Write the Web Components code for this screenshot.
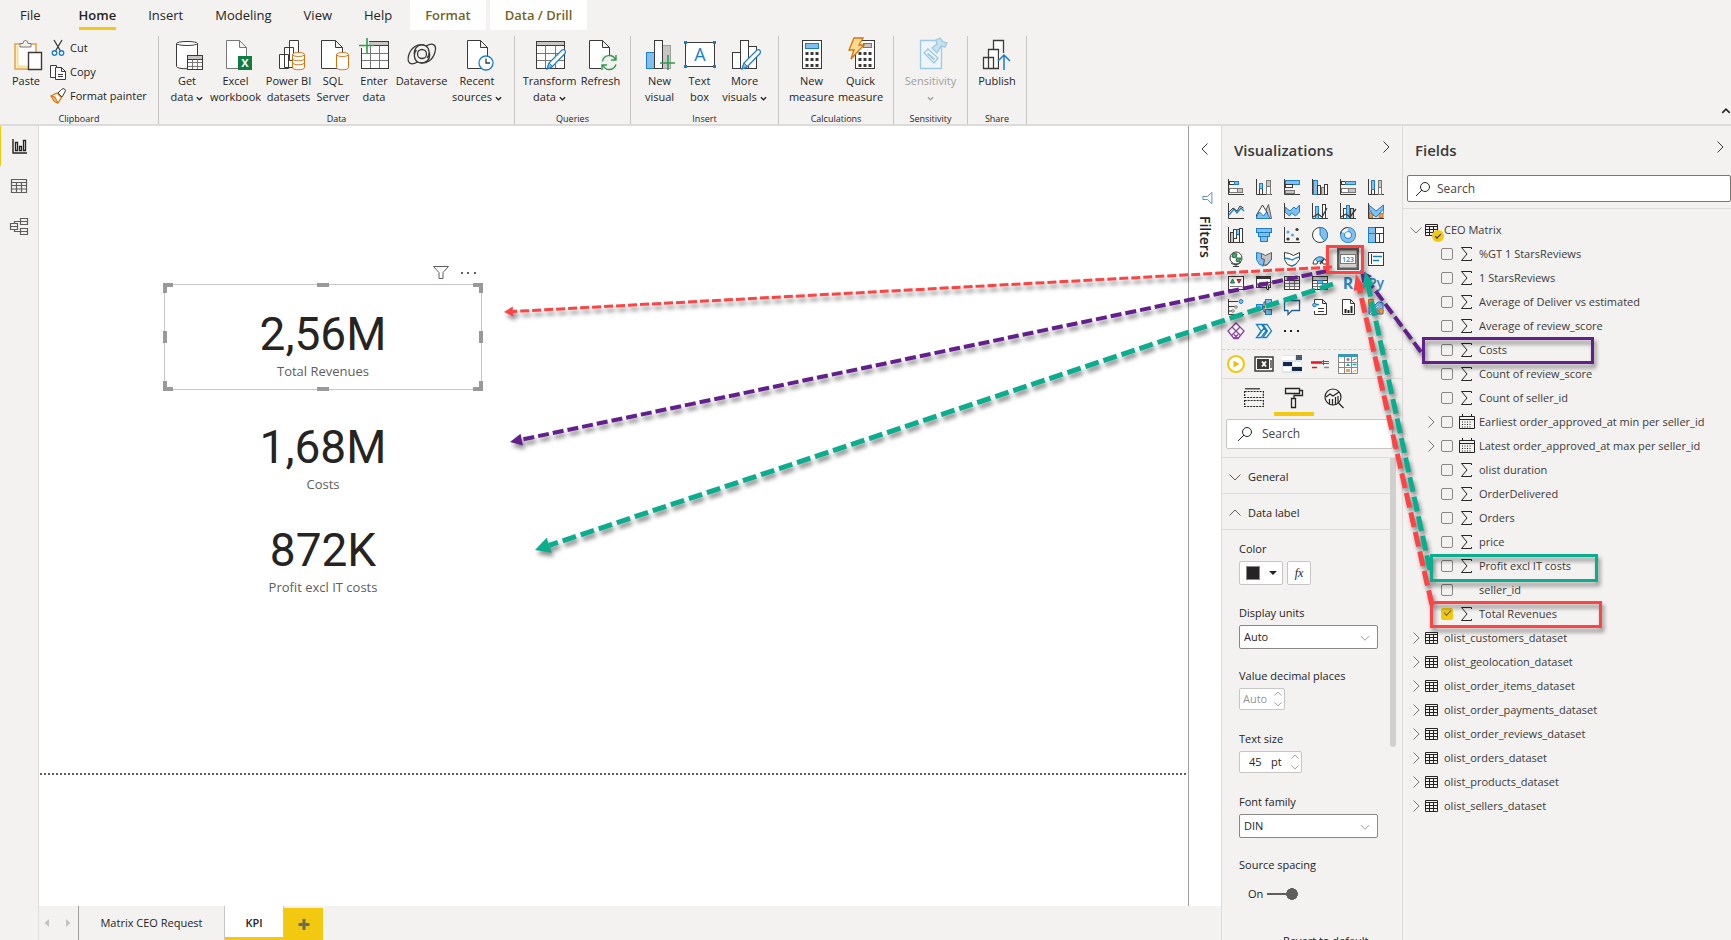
<!DOCTYPE html>
<html lang="en">
<head>
<meta charset="utf-8">
<title>KPI - Power BI Desktop</title>
<style>
  html, body { margin: 0; height: 100%; }
  body {
    font-family: "Open Sans", "Noto Sans", sans-serif;
    font-size: 11px; line-height: 16px; color: #252423;
    background: #f3f2f1; overflow: hidden;
    --yellow: #f2c811; --line: #dedcda; --chrome: #f3f2f1;
  }
</style>
</head>
<body>
<pbi-app></pbi-app>

<script>
/* ---------- icon library ---------- */
const D = '#3b3a39', B = '#1a7fc9', L = '#83beec', G = '#c8c6c4', O = '#d8720f';
const doc = (x, y, w, h, c = D) =>
  `<path fill="#fff" stroke="${c}" d="M${x} ${y}h${w - 7}l7 7v${h - 7}h-${w}zM${x + w - 7} ${y}v7h7"/>`;
const cyl = (x, y, w, h, c, bands = 0) => {
  let s = `<path fill="#fff" stroke="${c}" d="M${x} ${y + 2}v${h - 4}c0 3 ${w} 3 ${w} 0v-${h - 4}"/><ellipse cx="${x + w / 2}" cy="${y + 2}" rx="${w / 2}" ry="2" fill="#fff" stroke="${c}"/>`;
  for (let i = 1; i <= bands; i++) s += `<path fill="none" stroke="${c}" d="M${x} ${y + 2 + i * 4}c0 3 ${w} 3 ${w} 0"/>`;
  return s;
};
const grid = (x, y, w, h, c = D) => {
  const a = Math.round((h - 4) / 3), b = Math.round((h - 4) * 2 / 3), p = Math.round(w / 3), q = Math.round(w * 2 / 3);
  return `<path fill="#fff" stroke="${c}" d="M${x} ${y}h${w}v${h}h-${w}z"/><path fill="${G}" stroke="${c}" d="M${x} ${y}h${w}v4h-${w}z"/><path fill="none" stroke="#797775" d="M${x} ${y + 4 + a}h${w}M${x} ${y + 4 + b}h${w}M${x + p} ${y + 4}v${h - 4}M${x + q} ${y + 4}v${h - 4}"/><path fill="none" stroke="${c}" d="M${x} ${y}h${w}v${h}h-${w}z"/>`;
};
const pen = (x, y) =>
  `<g transform="translate(${x} ${y})"><path fill="#fff" stroke="${B}" stroke-width="1.3" d="M1 20l2-6L16 1q2-1 3 .5t0 3L6 18z"/><path fill="${L}" stroke="${B}" d="M1 20l2-6 3.500 3.500z"/></g>`;
const axes = () => `<path fill="none" stroke="${D}" d="M.5 0v15.500H16"/>`;
const r = (x, y, w, h, f, s) => `<rect x="${x}" y="${y}" width="${w}" height="${h}" fill="${f}" stroke="${s}"/>`;
const keys = (x, y) => { let s = ''; for (let i = 0; i < 3; i++) for (let j = 0; j < 3; j++) s += `<rect x="${x + i * 5}" y="${y + j * 6}" width="3" height="3" fill="${D}"/>`; return s; };

const ICONS = {
  /* ribbon, 32 x 32 */
  paste: `<path fill="#fff" stroke="#e3a043" stroke-width="1.500" d="M5 5h21v25H5z"/><path fill="none" stroke="#f9dd97" stroke-width="2" d="M7.500 7v20.500H18"/><path fill="#f3f2f1" stroke="#797775" d="M10 8V4.500h3q0-3 2.500-3t2.500 3h3V8z"/><path fill="#fff" stroke="${D}" stroke-width="1.400" d="M18.500 13.500h13v17h-13z"/>`,
  getdata: cyl(5.5, 2.5, 21, 27, D) + grid(16.5, 16.5, 15, 14),
  excel: doc(6.5, 1.5, 20, 28, '#797775') + `<rect x="18" y="17" width="14" height="14" fill="#107c41"/><text x="25" y="28" text-anchor="middle" font-size="11" font-weight="700" fill="#fff">X</text>`,
  pbids: `<path fill="#fff" stroke="${D}" d="M16.500 1.500h9v20h-9zM11.500 8.500h9v20h-9zM6.500 15.500h9v14h-9z"/>` + cyl(19.5, 13.5, 12, 17, O, 2),
  sql: doc(4.5, 1.5, 21, 28) + cyl(19.5, 13.5, 12, 17, O),
  enter: grid(3.5, 2.5, 27, 27) + `<path fill="#f3f2f1" d="M0 0h11v9H0z"/><path stroke="#2f9b4d" stroke-width="1.600" d="M9 -1v15M1 6.500h15"/>`,
  dataverse: `<g fill="none" stroke="${D}" stroke-width="1.300"><circle cx="16" cy="15" r="4.500"/><path d="M8.500 16.500C7 8 14 4 20 7c4 3 4 9 1 12M23.500 13.500c1.500 8-5.500 12.500-12 9.500-4-3-4-9-1-12"/><path d="M20 7c7-4 11-1 9 6-2 8-9 13-17.500 10M11.500 23c-7 4-10.500 1-9-6C4.500 9 12 3 20 7"/></g>`,
  recent: doc(6.5, 1.5, 20, 28) + `<circle cx="25" cy="24" r="7" fill="#fff" stroke="${B}" stroke-width="1.300"/><path fill="none" stroke="${D}" stroke-width="1.300" d="M25 19.500V24h4"/>`,
  transform: grid(2.5, 2.5, 28, 27) + pen(12, 10),
  refresh: doc(4.5, 1.5, 20, 28) + `<rect x="16" y="16" width="16" height="16" fill="#f3f2f1"/><path fill="none" stroke="#2f9b4d" stroke-width="1.400" d="M17.500 22.500c1-7 10-8 13-2M31 16v5h-5M31 25.500c-2 6-10 7-13 1M17 31v-5h5"/>`,
  newvisual: r(2.5, 13.5, 8, 16, L, B) + r(18.5, 6.500, 8, 23, G, '#a19f9d') + r(10.5, 1.5, 8, 28, '#fff', D) + `<path stroke="#2f9b4d" stroke-width="1.600" d="M24 16v15M16 24h15"/>`,
  textbox: r(1.5, 3.5, 29, 24, '#fff', D) + `<g fill="${B}"><path d="M0 2h3v3H0zM29 2h3v3h-3zM0 26h3v3H0zM29 26h3v3h-3z"/></g><text x="16" y="22" text-anchor="middle" font-size="18" fill="${B}">A</text>`,
  morevis: r(3.5, 13.5, 8, 16, '#fff', D) + r(19.5, 7.500, 8, 22, '#fff', D) + r(11.5, 1.5, 8, 28, '#fff', D) + pen(12, 10),
  measure: r(6.5, 1.5, 19, 28, '#fff', D) + r(9.5, 4.5, 13, 5, L, B) + keys(9.5, 13),
  quick: r(10.5, 1.5, 19, 28, '#fff', D) + r(18.5, 4.5, 8, 4, G, '#797775') + keys(13.5, 13) + `<path fill="#fbdc8e" stroke="${O}" stroke-width="1.300" d="M9-1h9l-4 7h5L6 20l3-9H4z"/>`,
  sensitivity: `<g fill="#eef5f9" stroke="#9dc9e2" stroke-width="1.300"><path d="M5.500 1.500h21v28h-21z"/><path d="M9 14l4-4 10 9-4 5z"/><path d="M12.500 14.500l7 6" stroke-width="2"/><path fill="#c9e1ee" d="M17 9l5-4-1-4 4-2 3 4 4 1-2 4-4-1-4 7z"/></g>`,
  publish: `<path fill="#fff" stroke="${D}" stroke-width="1.300" d="M12.500 1.500h10v27h-10z"/><path fill="#fff" stroke="${D}" stroke-width="1.300" d="M7.500 10.500h10v19h-10zM2.500 18.500h10v11h-10z"/><rect x="18" y="14" width="12" height="16" fill="#f3f2f1"/><path fill="none" stroke="${B}" stroke-width="1.500" d="M23 31V16M17 22l6-6 6 6"/>`,

  /* small ones, 16 x 16 */
  cut: `<path fill="none" stroke="${D}" stroke-width="1.300" d="M4 0l6.500 11M12 0L5.500 11"/><g fill="#fff" stroke="${B}" stroke-width="1.400"><circle cx="4.500" cy="13" r="2.200"/><circle cx="11.500" cy="13" r="2.200"/></g>`,
  copy: `<path fill="#fff" stroke="${D}" d="M5 13.500H.5V1.500h6V4M5.500 3.500h6l4 4v8h-10zM11.500 3.500v4h4M8 10.500h5M8 12.500h5"/>`,
  painter: `<path fill="#fff" stroke="${D}" d="M8 5l4 4 3-5q1-2-.5-3t-3 .5z"/><path fill="#fff" stroke="${O}" stroke-width="1.200" d="M1 8l6-3 4.500 4.500L8 15z"/><path fill="#f6b262" stroke="${O}" d="M1 8l4 1 3 6-4-1.500z"/>`,
  report: `<path fill="none" stroke="#252423" stroke-width="1.400" d="M1 1v14h14"/><path fill="none" stroke="#252423" stroke-width="1.300" d="M3.500 4.500h2v8h-2zM7.500 8.500h2v4h-2zM11.500 2.500h2v10h-2z"/>`,
  data: `<path fill="none" stroke="#605e5c" stroke-width="1.200" d="M.5 1.500h15v13H.5zM.5 4.500h15M.5 7.500h15M.5 11h15M5.500 4v10.500M10.500 4v10.500"/>`,
  model: `<path fill="none" stroke="#605e5c" stroke-width="1.200" d="M-.5 5.500h7v6h-7zM-.5 8.500h7M9.500.5h7v6h-7zM9.500 3.500h7M9.500 10.500h7v6h-7zM9.500 13.500h7M3.500 5.500v-2h6M3.500 11.500v2h6"/>`,
  chevR: `<path fill="none" stroke="currentColor" d="M5.500 2.500L11 8l-5.500 5.500"/>`,
  chevL: `<path fill="none" stroke="currentColor" d="M10.500 2.500L5 8l5.500 5.500"/>`,
  chevD: `<path fill="none" stroke="currentColor" d="M2.500 5.500L8 11l5.500-5.500"/>`,
  chevU: `<path fill="none" stroke="currentColor" d="M2.500 10.500L8 5l5.500 5.500"/>`,
  chevDbold: `<path fill="none" stroke="currentColor" stroke-width="3" d="M2 5l6 6 6-6"/>`,
  chevUbold: `<path fill="none" stroke="currentColor" stroke-width="2.500" d="M2 11l6-6 6 6"/>`,
  search: `<circle cx="10" cy="6" r="4.500" fill="none" stroke="currentColor"/><path stroke="currentColor" d="M7 9l-6 6"/>`,
  funnel: `<path fill="none" stroke="currentColor" d="M.5 1.500h15L10 7.500v6H6v-6z"/>`,
  dots: `<g fill="currentColor"><rect x="0" y="7" width="2" height="2"/><rect x="6" y="7" width="2" height="2"/><rect x="13" y="7" width="2" height="2"/></g>`,
  sigma: `<path fill="none" stroke="#252423" d="M12.500 3V1.500h-10L8 8l-5.500 6.500h10V13"/>`,
  calendar: `<path fill="none" stroke="#252423" d="M.5 2.500h15v12H.5zM.5 5.500h15M3.500 0v2.500M12.500 0v2.500"/><path stroke="#252423" stroke-dasharray="1 1.500" d="M3 8h10M3 10.500h10M3 13h10"/>`,
  table: `<path fill="none" stroke="#252423" d="M1.500 2.500h12v11h-12zM1.500 4.500h12M1.500 7.500h12M1.500 10.500h12M5.500 4v9.500M9.500 4v9.500"/>`,
  plus: `<path stroke="#6b6b60" stroke-width="3" d="M8 3v11M2.500 8.500h11"/>`,
  triL: `<path fill="#c2c2c2" d="M10 4v8L5.500 8z"/>`,
  triR: `<path fill="#c2c2c2" d="M6 4v8l4.500-4z"/>`,

  /* visual gallery, 16 x 16 */
  v0: axes() + r(1.5, 2.5, 5, 3, '#fff', D) + r(6.5, 2.5, 4, 3, L, B) + r(1.5, 9.5, 8, 4, '#fff', '#797775') + r(9.5, 9.5, 5, 4, G, '#797775'),
  v1: axes() + r(3.5, 9.500, 3, 6, '#fff', D) + r(3.5, 4.5, 3, 5, L, B) + r(10.5, 7.5, 4, 8, '#fff', '#797775') + r(10.5, 1.5, 4, 6, G, '#797775'),
  v2: axes() + r(1.5, 1.5, 14, 4, L, B) + r(1.5, 5.5, 7, 3, '#fff', D) + r(1.5, 11.500, 9, 3, G, '#797775'),
  v3: axes() + r(1.5, 1.5, 4, 14, L, B) + r(5.5, 6.500, 3, 9, '#fff', D) + r(9.5, 8.500, 3, 7, G, '#797775') + r(12.5, 5.500, 3, 10, '#fff', D),
  v4: axes() + r(1.5, 2.5, 4, 3, '#fff', D) + r(5.5, 2.5, 10, 3, L, B) + r(1.5, 9.5, 7, 4, '#fff', '#797775') + r(8.5, 9.5, 7, 4, G, '#797775'),
  v5: axes() + r(3.5, 10.500, 3, 5, '#fff', D) + r(3.5, 1.5, 3, 9, L, B) + r(10.5, 8.5, 3, 7, '#fff', '#797775') + r(10.5, 1.5, 3, 7, G, '#797775'),
  v6: axes() + `<path fill="none" stroke="${B}" stroke-width="1.300" d="M1 12l5-6 3 4 4-5 3 3"/><path fill="none" stroke="${D}" d="M1 9l4-4 4 3 3-5 3.500 2"/>`,
  v7: `<path fill="${G}" stroke="#605e5c" d="M6 15.500l6.500-14 3 14z"/><path fill="#fff" stroke="${D}" d="M.5 12l6-10 5 8v5H.5z"/><path fill="${L}" stroke="${B}" d="M.5 15.500V14l3-5 4 4 3-4 3.500 6.500z"/>`,
  v8: `<path fill="${L}" stroke="${B}" d="M1 4l5 4 4-4 2 2 3.500-4v7l-4 4-4-3-2 3-4.500-4z"/>` + axes(),
  v9: axes() + r(3.5, 3.5, 3, 12, L, B) + r(10.5, 1.5, 3, 14, '#fff', D) + `<path fill="none" stroke="${D}" stroke-width="1.300" d="M1 14l5-3 4 3 5-9"/>`,
  v10: axes() + r(3.5, 5.5, 3, 10, '#fff', D) + r(6.5, 2.5, 3, 13, L, B) + r(10.5, 5.5, 3, 10, G, D) + `<path fill="none" stroke="${D}" stroke-width="1.300" d="M1 14l5-3 4 3 6-8"/>`,
  v11: `<path fill="#fff" stroke="${O}" d="M1 8.500l4-2 4 4 6.500-5v5l-5 1-2 2-6-2z"/><path fill="#f2a14a" stroke="${O}" d="M1.500 10h3v5h-3zM11 10.500h4v4h-4z"/><path fill="${L}" stroke="${B}" d="M1 2l7 6 7.500-6v4l-5 6-2.500 2-3-2-4-6z"/>` + axes(),
  v12: axes() + r(2.5, 5.5, 3, 10, G, D) + r(5.5, 2.5, 3, 9, '#fff', D) + r(8.500, 2.5, 3, 5, L, '#1f5f91') + r(11.5, 1.5, 3, 14, '#fff', D),
  v13: r(.5, 1.5, 15, 4, L, B) + r(2.5, 5.5, 11, 4, L, B) + r(4.5, 9.5, 7, 5, L, B),
  v14: axes() + `<g fill="${D}"><circle cx="13" cy="2.500" r="1.600"/><circle cx="4" cy="12" r="1.600"/><circle cx="13.500" cy="12" r="1.600"/></g><g fill="#5ea7dd"><circle cx="4" cy="5" r="1.600"/><circle cx="8.500" cy="8" r="1.600"/></g>`,
  v15: `<circle cx="8" cy="8" r="7.500" fill="#fff" stroke="${D}"/><path fill="${L}" stroke="${B}" d="M8 .5a7.500 7.500 0 0 1 4.500 13.500L8 8z"/>`,
  v16: `<circle cx="8" cy="8" r="5.500" fill="none" stroke="${B}" stroke-width="5"/><circle cx="8" cy="8" r="5.500" fill="none" stroke="${L}" stroke-width="3.500"/><path fill="none" stroke="#f3f2f1" stroke-width="3.500" d="M3 5.500A5.500 5.500 0 0 1 8 2.500"/><path fill="none" stroke="${D}" d="M.5 7A7.500 7.500 0 0 1 8 .5"/>`,
  v17: r(.5, .5, 7, 15, L, B) + r(7.500, .5, 8, 6, '#fff', D) + r(7.500, 6.500, 4, 9, '#fff', D) + r(11.500, 6.500, 4, 9, '#fff', D) + `<path stroke="${B}" d="M0 6.500h8"/>`,
  v18: `<circle cx="8" cy="7" r="6" fill="#fff" stroke="${D}"/><path fill="#4da766" stroke="#207245" d="M5 2l4 1-1 4-4-1zM9 7l4 0-2 4-3-1z"/><path fill="none" stroke="${D}" d="M3 12q5 4 10-1M8 14v1.500M5 15.500h6"/>`,
  v19: `<path fill="${L}" stroke="${B}" d="M.5 1.500l5 1 0 5 3 1-1 6-4-1-3-5z"/><path fill="${G}" stroke="#605e5c" d="M5.500 2.500l4 2 6-3v7l-4 5-4 1 1-6-3-1z"/><path fill="none" stroke="${B}" d="M6 15l5-1 4.500-6"/>`,
  v20: `<path fill="#fff" stroke="${D}" d="M.5 1.500l5 1 4 2 6-3v7l-4 5-4 1.500-4-1.500-3-5z"/><path fill="none" stroke="${B}" stroke-width="1.300" d="M.5 7l5 1 3 1 3-2 4-1M5 14l3 1 4-2"/>`,
  v21: `<path fill="#fff" stroke="${D}" d="M1 13a7 7 0 0 1 14 0h-4a3 3 0 0 0-6 0z"/><path fill="${L}" stroke="${B}" d="M3 8a7 7 0 0 1 8-1.500L9 10a3 3 0 0 0-3 1z"/><path stroke="${D}" stroke-width="1.500" d="M8 13l4-5"/>`,
  v22: `<rect x="-3" y="-3" width="22" height="22" fill="#605e5c"/><rect x="-.5" y="-.5" width="17" height="17" fill="#d2d0ce"/><rect x=".5" y="3.500" width="15" height="9" fill="#fff" stroke="#797775"/><text x="8" y="11" text-anchor="middle" font-size="7" font-weight="600" fill="${B}">123</text>`,
  v23: r(.5, 1.5, 15, 13, '#fff', D) + `<path stroke="${D}" d="M3.500 3v10"/><path stroke="${B}" stroke-width="1.600" d="M5 5.500h9M5 9.500h6"/>`,
  v24: r(.5, 1.5, 15, 13, '#fff', D) + `<path fill="#4da766" stroke="#207245" d="M2.500 8l2-4 2 4z"/><path fill="#e0403d" stroke="#a4262c" d="M9 4.500h4l-2 3.500z"/><path stroke="#797775" d="M2 11.500h12"/>`,
  v25: r(.5, 1.5, 14, 11, '#fff', D) + `<path stroke="${D}" stroke-width="2" d="M1 3h13"/><path stroke="#797775" d="M3 7.500h6"/><path fill="#fff" stroke="${D}" d="M7 7.500h8.500l-3 3.500v4l-2-1v-3z"/>`,
  v26: grid(.5, 1.5, 15, 13),
  v27: grid(.5, 1.5, 15, 13) + `<path fill="${L}" stroke="${B}" d="M5.500 5.500h5v3h-5zM10.500 8.500h5v6h-5z"/>`,
  v28: `<text x="8" y="14" text-anchor="middle" font-size="16" font-weight="700" fill="#2b83c4">R</text>`,
  v29: `<text x="8" y="13" text-anchor="middle" font-size="14" font-weight="600" fill="#2b83c4">Py</text>`,
  v30: axes() + `<path fill="none" stroke="${D}" d="M1 2.500h9M1 7.500h6M1 12h3"/><circle cx="13" cy="2.500" r="2" fill="${L}" stroke="${B}"/><circle cx="8" cy="8" r="1.300" fill="#fff" stroke="#797775"/><circle cx="5" cy="12" r="1.300" fill="#fff" stroke="#797775"/>`,
  v31: r(.5, 5.5, 6, 5, L, B) + r(9.5, .5, 6, 5, L, B) + r(9.5, 10.5, 6, 5, L, B) + `<path fill="none" stroke="${D}" d="M6.500 8h3M9.500 3H8v10h1.500"/>`,
  v32: `<path fill="#fff" stroke="#1f5f91" stroke-width="1.300" d="M.5 1.500h15v10H8l-4 4v-4H.5z"/>`,
  v33: `<path fill="#fff" stroke="${D}" d="M2.500 8V.5h8l4 4v11h-12V12M10.500.5v4h4M6 9.500h6M6 12.500h6"/><path stroke="${B}" stroke-width="1.400" d="M3 5.500h4"/><circle cx="2.500" cy="6" r="1.800" fill="${L}" stroke="${B}"/>`,
  v34: `<path fill="#fff" stroke="${D}" d="M2.500.5h8l4 4v11h-12zM10.500.5v4h4"/><path stroke="#252423" stroke-width="2" d="M5.500 14v-4M8.500 14v-3M11.500 14V7"/>`,
  v35: `<path fill="${L}" stroke="${B}" d="M1 6l4 2 5-5 5 1v11H1z"/><path fill="none" stroke="#fff" d="M2 15l8-8"/><path fill="#f2a14a" stroke="${O}" d="M.5.5h5v5h-5zM13 9l2.500 3-2.500 3.500-2.500-3.500z"/>`,
  v36: `<path fill="#fff" stroke="#8a3fa0" stroke-width="1.300" d="M8 0l8 8-6 7.500H6L0 8z"/><path fill="none" stroke="#8a3fa0" stroke-width="1.300" d="M4 4l8 8M12 4L4 12M6 15.500l4-4M10 15.500l-4-4"/>`,
  v37: `<path fill="#fff" stroke="${B}" stroke-width="1.300" d="M.5 1.500h5L10 8l-5 6.500H.5L5 8zM7 1.500h4L15.500 8l-5 6.500H7L11.500 8zM2.500 12.500L8 5"/>`,
  v38: `<g fill="#252423"><rect x="0" y="7" width="2" height="2"/><rect x="6" y="7" width="2" height="2"/><rect x="13" y="7" width="2" height="2"/></g>`,

  /* imported visuals and format tabs, 20 x 20 */
  c0: `<circle cx="10" cy="10" r="8" fill="#fff" stroke="#f2c811" stroke-width="2.200"/><path fill="#f2b911" d="M7.500 6.500v7l6-3.500z"/>`,
  c1: `<rect x="1" y="3" width="18" height="14" fill="#fff" stroke="#3b3a39" stroke-width="1.500"/><rect x="3" y="5" width="12" height="10" fill="#3b3a39"/><rect x="16" y="6" width="2" height="8" fill="#797775"/><path stroke="#fff" stroke-width="1.800" d="M8 7.500l4 5M12 7.500l-4 5"/>`,
  c2: `<path fill="#dfe3ea" d="M0 1h20v18H0z"/><path fill="#fff" d="M0 2h13v4H0z"/><path fill="#4a5a70" d="M14 1h6v5h-6z"/><path fill="#14284b" d="M1 8h9v4H1zM10 13h10v4H10z"/><path fill="#fff" d="M11 8h8v4h-8zM1 13h8v4H1z"/>`,
  c3: `<path stroke="#e81123" stroke-width="2.500" d="M1 8.500h11"/><path stroke="#605e5c" stroke-width="1" d="M12 7.500h7M12 9.500h7M13.500 6v5"/><path stroke="#e81123" stroke-width="1.500" d="M2 13.500h5"/><path stroke="#8a8886" stroke-width="1.500" d="M14 13.500h5"/>`,
  c4: `<path fill="#fff" stroke="#8a8886" d="M.5 2.500h19v17H.5zM.5 8.500h19M.5 13.500h19M6.500 2.500v17M13.500 2.500v17"/><path fill="#3599b8" d="M0 0h20v3H0z"/><circle cx="10" cy="5.500" r="1.500" fill="#a66999"/><path stroke="#a66999" d="M14.500 6.500l4-2"/><path fill="#01b8aa" d="M8 12l2-3 2 3z"/><path stroke="#01b8aa" stroke-width="1.500" d="M14.500 10.500h4"/><path fill="#fe9666" d="M8 15h4v3H8z"/><path stroke="#fe9666" d="M14.500 18l4-2"/>`,
  f0: `<path fill="none" stroke="#252423" stroke-width="1.200" d="M1 .8h15"/><path fill="none" stroke="#252423" stroke-width="1.200" stroke-dasharray="2 1" d="M.6 3.500h18.800v6H.6zM.6 12.500h18.800v6H.6z"/>`,
  f1: `<path fill="none" stroke="#252423" stroke-width="1.300" d="M1.500 .5h14v5h-14zM15.500 2.500h3v5h-8.500v3M7.500 10.500h4v9h-4z"/>`,
  f2: `<g fill="none" stroke="#252423" stroke-width="1.200"><circle cx="9" cy="9" r="8"/><path d="M14.500 15l5 5M2 9l4-3 3 2 6-4M5.500 16v-5M8.500 17v-6M11.500 16.500V9M14 15V8"/></g>`,
};

/* Base class: every element renders its html() and css() in an open shadow root. */
class Base extends HTMLElement {
  connectedCallback() {
    if (this.shadowRoot) return;
    this.attachShadow({ mode: 'open' }).innerHTML =
      `<style>*{box-sizing:border-box}button,input,select{font:inherit;color:inherit;background:none;border:0;margin:0;padding:0;border-radius:0;outline:0}a{color:inherit;text-decoration:none}h2{margin:0}${this.css()}</style>${this.html()}`;
  }
  at(n, d = '') { return this.getAttribute(n) ?? d; }
}
const define = (n, c) => customElements.define(n, c);

define('ui-icon', class extends Base {
  css() { return `:host{display:inline-block;flex:none}svg{display:block;overflow:visible}`; }
  html() {
    const box = +this.at('box', '16'), size = +this.at('size', box);
    return `<svg width="${size}" height="${size}" viewBox="0 0 ${box} ${box}" aria-hidden="true">${ICONS[this.at('name')]}</svg>`;
  }
});

/* ---------- ribbon ---------- */
define('ribbon-tab', class extends Base {
  css() { return `:host{display:block;font-size:13px}
    button{height:30px;padding:0 16px;display:block}
    span{display:block;height:30px;line-height:30px}
    :host([first]) button{padding:0 22px 0 20px}
    :host([active]){font-weight:600} :host([active]) span{border-bottom:3px solid var(--yellow)}
    :host([context]){font-weight:600;color:#74631f;margin:0 2px}
    :host([context]) button{background:#fff;padding:0 15px}`; }
  html() { return `<button type="button"><span><slot></slot></span></button>`; }
});
define('ribbon-group', class extends Base {
  css() { return `:host{display:flex;flex-direction:column;height:88px;border-right:1px solid #c8c6c4;width:var(--w);flex:none}
    .items{display:flex;justify-content:var(--j,center);height:74px;flex:none;padding:0 4px}
    .name{font-size:9px;line-height:14px;text-align:center;padding-top:2px}`; }
  html() { return `<div class="items"><slot></slot></div><div class="name">${this.at('name')}</div>`; }
});
define('ribbon-button', class extends Base {
  css() { return `:host{display:block;flex:none;width:var(--w)}
    button{width:100%;display:flex;flex-direction:column;align-items:center;padding-top:3px;white-space:nowrap;line-height:16px}
    ui-icon{margin-bottom:2px} .l{display:flex;align-items:center;gap:3px;height:16px}
    .l ui-icon{margin:2px 0 0}
    :host([off]){color:#a19f9d}`; }
  html() {
    const lines = this.at('label').split('|'), arrow = this.hasAttribute('menu');
    return `<button type="button" ${this.hasAttribute('off') ? 'disabled' : ''}><ui-icon name="${this.at('icon')}" box="32"></ui-icon>${
      lines.map((t, i) => `<span class="l">${t}${arrow && i === lines.length - 1 ? '<ui-icon name="chevDbold" size="7"></ui-icon>' : ''}</span>`).join('')}</button>`;
  }
});
define('clip-button', class extends Base {
  css() { return `:host{display:block}button{display:flex;align-items:center;gap:4px;height:24px;white-space:nowrap}`; }
  html() { return `<button type="button"><ui-icon name="${this.at('icon')}"></ui-icon><slot></slot></button>`; }
});
define('pbi-ribbon', class extends Base {
  css() { return `:host{display:block;background:var(--chrome);border-bottom:2px solid var(--line)}
    nav{display:flex;height:30px}
    .bar{display:flex;align-items:flex-end;height:94px;position:relative}
    .stack{padding-left:2px}
    .fold{position:absolute;right:0;bottom:4px}`; }
  html() {
    const b = (icon, label, w, extra = '') => `<ribbon-button icon="${icon}" label="${label}" style="--w:${w}px" ${extra}></ribbon-button>`;
    return `<nav><ribbon-tab first>File</ribbon-tab><ribbon-tab active>Home</ribbon-tab><ribbon-tab>Insert</ribbon-tab><ribbon-tab>Modeling</ribbon-tab><ribbon-tab>View</ribbon-tab><ribbon-tab>Help</ribbon-tab><ribbon-tab context>Format</ribbon-tab><ribbon-tab context>Data / Drill</ribbon-tab></nav>
    <div class="bar">
      <ribbon-group name="Clipboard" style="--w:159px;--j:flex-start">${b('paste', 'Paste', 44)}<div class="stack"><clip-button icon="cut">Cut</clip-button><clip-button icon="copy">Copy</clip-button><clip-button icon="painter">Format painter</clip-button></div></ribbon-group>
      <ribbon-group name="Data" style="--w:356px;--j:flex-start">${b('getdata', 'Get|data', 48, 'menu')}${b('excel', 'Excel|workbook', 49)}${b('pbids', 'Power BI|datasets', 57)}${b('sql', 'SQL|Server', 32)}${b('enter', 'Enter|data', 50)}${b('dataverse', 'Dataverse', 45)}${b('recent', 'Recent|sources', 66, 'menu')}</ribbon-group>
      <ribbon-group name="Queries" style="--w:116px">${b('transform', 'Transform|data', 56, 'menu')}${b('refresh', 'Refresh', 46)}</ribbon-group>
      <ribbon-group name="Insert" style="--w:148px">${b('newvisual', 'New|visual', 42)}${b('textbox', 'Text|box', 38)}${b('morevis', 'More|visuals', 52, 'menu')}</ribbon-group>
      <ribbon-group name="Calculations" style="--w:115px">${b('measure', 'New|measure', 49)}${b('quick', 'Quick|measure', 49)}</ribbon-group>
      <ribbon-group name="Sensitivity" style="--w:74px">${b('sensitivity', 'Sensitivity|', 60, 'menu off')}</ribbon-group>
      <ribbon-group name="Share" style="--w:59px">${b('publish', 'Publish', 48)}</ribbon-group>
      <button class="fold" type="button" aria-label="Collapse ribbon"><ui-icon name="chevUbold" size="10"></ui-icon></button>
    </div>`;
  }
});

/* ---------- left rail ---------- */
define('side-rail', class extends Base {
  css() { return `:host{display:block;border-right:1px solid var(--line)}
    button{display:flex;align-items:center;justify-content:center;width:100%;height:40px}
    .on{border-left:1px solid var(--yellow)}`; }
  html() { return ['report', 'data', 'model'].map((n, i) => `<button type="button" class="${i ? '' : 'on'}" aria-label="${n} view"><ui-icon name="${n}"></ui-icon></button>`).join(''); }
});

/* ---------- canvas ---------- */
define('kpi-card', class extends Base {
  css() { return `:host{display:block;position:relative;width:318px;height:106px;text-align:center;padding-top:23px}
    .v{font:46px/54px Roboto,sans-serif} .n{font-size:13px;line-height:20px;color:#605e5c}
    :host([selected]){outline:1px solid #c8c6c4;outline-offset:-1px}
    .h{display:none} :host([selected]) .h{display:block;position:absolute;inset:-1px;width:auto}
    .h i{position:absolute;background:#999}
    .w{width:12px;height:4px;left:calc(50% - 6px)} .t{width:4px;height:12px;top:calc(50% - 6px)}
    .c{width:10px;height:10px;background:none!important;border:0 solid #999}
    .tools{display:none} :host([selected]) .tools{display:flex;gap:12px;position:absolute;right:5px;top:-19px;color:#605e5c}`; }
  html() { return `<div class="tools"><ui-icon name="funnel"></ui-icon><ui-icon name="dots"></ui-icon></div>
    <div class="v"><slot></slot></div><div class="n">${this.at('name')}</div>
    <div class="h"><i class="w" style="top:0"></i><i class="w" style="bottom:0"></i><i class="t" style="left:0"></i><i class="t" style="right:0"></i>
    <i class="c" style="left:0;top:0;border-width:4px 0 0 4px"></i><i class="c" style="right:0;top:0;border-width:4px 4px 0 0"></i><i class="c" style="left:0;bottom:0;border-width:0 0 4px 4px"></i><i class="c" style="right:0;bottom:0;border-width:0 4px 4px 0"></i></div>`; }
});
define('report-canvas', class extends Base {
  css() { return `:host{display:flex;flex-direction:column;background:#fff;min-width:0}
    .cards{display:flex;flex-direction:column;padding:158px 0 0 125px;height:647px}
    .gap{margin-top:7px} .gap2{margin-top:-3px}
    .edge{height:2px;margin-left:1px;background:repeating-linear-gradient(90deg,#605e5c 0 2px,transparent 2px 4px)}`; }
  html() { return `<div class="cards"><kpi-card selected name="Total Revenues">2,56M</kpi-card><kpi-card class="gap" name="Costs">1,68M</kpi-card><kpi-card class="gap2" name="Profit excl IT costs">872K</kpi-card></div><div class="edge"></div>`; }
});
define('filters-pane', class extends Base {
  css() { return `:host{display:flex;flex-direction:column;align-items:center;background:#fff;border-left:1px solid #a19f9d;padding-top:15px}
    .f{margin:31px 0 0 4px;transform:rotate(90deg);color:#2b6fa8}
    h2{writing-mode:vertical-rl;font-size:14px;font-weight:600;line-height:20px;margin-top:12px}
    button{color:#3b3a39}`; }
  html() { return `<button type="button" aria-label="Expand filters"><ui-icon name="chevL"></ui-icon></button><ui-icon class="f" name="funnel" size="12"></ui-icon><h2>Filters</h2>`; }
});
define('page-tabs', class extends Base {
  css() { return `:host{display:flex;height:34px;background:var(--chrome)}
    .nav{display:flex;align-items:center;justify-content:space-between;width:40px;padding:0 2px 0 0;border-right:1px solid #a19f9d}
    .p{padding:0 20px;border-right:1px solid #c8c6c4}
    .on{background:#fff;font-weight:600;border-bottom:3px solid var(--yellow);padding-top:3px;min-width:59px}
    .add{background:var(--yellow);width:39px;margin-top:2px;display:flex;align-items:center;justify-content:center}`; }
  html() { return `<div class="nav"><ui-icon name="triL"></ui-icon><ui-icon name="triR"></ui-icon></div><button type="button" class="p" style="min-width:146px">Matrix CEO Request</button><button type="button" class="p on">KPI</button><button type="button" class="add" aria-label="New page"><ui-icon name="plus"></ui-icon></button>`; }
});

/* ---------- right panes ---------- */
define('pane-head', class extends Base {
  css() { return `:host{display:flex;justify-content:space-between;height:45px;padding:12px var(--r,8px) 0 12px;color:#3b3a39}
    h2{font-size:15px;line-height:24px;font-weight:600}`; }
  html() { return `<h2><slot></slot></h2><button type="button" aria-label="Collapse" style="height:22px"><ui-icon name="chevR"></ui-icon></button>`; }
});
define('search-box', class extends Base {
  css() { return `:host{display:block}
    label{display:flex;align-items:center;gap:var(--g,6px);height:var(--h,27px);padding-left:var(--p,7px);background:#fff;border:1px solid var(--b,#797775);border-radius:2px}
    input{flex:1;min-width:0;font-size:12px} input::placeholder{color:#484644;opacity:1}`; }
  html() { return `<label><ui-icon name="search"></ui-icon><input type="search" placeholder="Search" aria-label="Search"></label>`; }
});
define('drop-down', class extends Base {
  css() { return `:host{display:block;position:relative;width:139px}
    select{appearance:none;width:100%;height:24px;background:#fff;border:1px solid #8a8886;border-radius:2px;padding-left:4px;display:block}
    ui-icon{position:absolute;right:7px;top:7px;color:#797775}`; }
  html() { return `<select aria-label="${this.at('label')}"><option>${this.at('value')}</option></select><ui-icon name="chevD" size="12"></ui-icon>`; }
});
define('spin-box', class extends Base {
  css() { return `:host{display:flex;width:var(--w);height:22px;background:#fff;border:1px solid #c8c6c4;border-radius:2px;align-items:center;padding-left:var(--p,3px)}
    input{width:28px} :host([muted]) input{color:#979593} .u{flex:1}
    .s{margin-left:auto;display:flex;flex-direction:column;padding-right:1px;color:#605e5c} ui-icon{display:block}`; }
  html() { const u = this.at('unit'); return `<input type="text" aria-label="${this.at('label')}" value="${this.at('value')}" style="width:${u ? 22 : 28}px">${u ? `<span class="u">${u}</span>` : ''}<span class="s"><ui-icon name="chevU" size="10"></ui-icon><ui-icon name="chevD" size="10"></ui-icon></span>`; }
});
define('format-section', class extends Base {
  css() { return `:host{display:block;border-bottom:1px solid var(--line);height:36px}
    button{display:flex;align-items:center;gap:5px;height:37px;padding-left:5px;width:100%} ui-icon{color:#605e5c}`; }
  html() { return `<button type="button"><ui-icon name="${this.at('icon')}"></ui-icon><slot></slot></button>`; }
});
define('viz-pane', class extends Base {
  css() { return `:host{display:flex;flex-direction:column;border-left:1px solid var(--line);border-right:1px solid var(--line);min-height:0;overflow:hidden}
    .gal{display:grid;grid-template-columns:repeat(6,28px);grid-auto-rows:24px;height:178px;padding-top:4px;flex:none}
    button{display:flex;align-items:center;justify-content:center}
    .cus{display:grid;grid-template-columns:repeat(6,28px);border-top:1px dashed #d2d0ce;border-bottom:1px solid var(--line);height:30px;flex:none}
    .tabs{display:flex;padding-left:12px;height:38px;flex:none}
    .tabs button{width:40px;height:37px}
    .tabs .on{border-bottom:4px solid var(--yellow);border-radius:1px;padding-top:4px}
    search-box{--h:30px;--b:#c8c6c4;--g:9px;--p:10px;margin:2px 9px 8px 4px}
    .scroll{border-top:1px solid var(--line);display:grid;grid-template-columns:1fr 6px;margin-right:6px;flex:1;min-height:0}
    .scroll>div:first-child{margin-right:-6px;grid-column:1;grid-row:1}
    .bar{grid-column:2;grid-row:1;background:#d2d0ce;height:289px;border-radius:0 0 3px 3px}
    .opts{padding:7px 0 0 17px}
    .lab{height:24px;padding-top:4px;display:block}
    .blk{display:block;margin-bottom:15px}
    .col{display:flex;gap:4px;margin:0 0 16px}
    .col button{height:24px;background:#fff;border:1px solid #c8c6c4;border-radius:2px}
    .sw{width:44px;gap:9px;padding-left:1px} .sw i{width:14px;height:14px;background:#252423;border:1px solid #8a8886}
    .sw b{border:4px solid transparent;border-top-color:#252423;border-bottom:0}
    .fx{width:24px;font:italic 12px "Liberation Serif",serif}
    .tog{display:flex;align-items:center;gap:4px;height:20px;margin:7px 0 0 9px}
    .tog input{appearance:none;width:31px;height:12px;background:radial-gradient(circle 6px at 25px 6px,#605e5c 94%,transparent),linear-gradient(#605e5c,#605e5c) 0 5px/25px 2px no-repeat}
    .rev{margin:29px 0 0 44px;white-space:nowrap;height:18px}`; }
  html() {
    let gal = ''; for (let i = 0; i < 39; i++) gal += `<button type="button" aria-label="Visual ${i + 1}"><ui-icon name="v${i}"></ui-icon></button>`;
    let cus = ''; for (let i = 0; i < 5; i++) cus += `<button type="button" aria-label="Imported visual ${i + 1}"><ui-icon name="c${i}" box="20"></ui-icon></button>`;
    return `<pane-head>Visualizations</pane-head><div class="gal">${gal}</div><div class="cus">${cus}</div>
    <div class="tabs"><button type="button" aria-label="Fields"><ui-icon name="f0" box="20"></ui-icon></button><button type="button" class="on" aria-label="Format"><ui-icon name="f1" box="20"></ui-icon></button><button type="button" aria-label="Analytics"><ui-icon name="f2" box="20"></ui-icon></button></div>
    <search-box></search-box>
    <div class="scroll"><div><format-section icon="chevD">General</format-section><format-section icon="chevU">Data label</format-section>
      <div class="opts"><span class="lab">Color</span><div class="col"><button type="button" class="sw" aria-label="Color"><i></i><b></b></button><button type="button" class="fx">fx</button></div>
      <span class="lab">Display units</span><drop-down class="blk" label="Display units" value="Auto"></drop-down>
      <span class="lab">Value decimal places</span><spin-box muted label="Value decimal places" value="Auto" style="--w:46px;margin-bottom:17px"></spin-box>
      <span class="lab">Text size</span><spin-box label="Text size" value="45" unit="pt" style="--w:63px;--p:9px;margin-bottom:17px"></spin-box>
      <span class="lab">Font family</span><drop-down class="blk" label="Font family" value="DIN"></drop-down>
      <span class="lab">Source spacing</span><label class="tog">On<input type="checkbox" checked></label><div class="rev">Revert to default</div></div></div><div class="bar"></div></div>`;
  }
});
define('field-row', class extends Base {
  css() { return `:host{display:block;height:24px;color:#3b3a39}
    label{display:flex;align-items:center;height:24px;white-space:nowrap;padding-left:20px}
    ui-icon{display:block}
    .x{width:18px;color:#797775} .t{margin-left:4px}
    input{appearance:none;width:12px;height:12px;border:1px solid #8a8886;border-radius:2px;position:relative;flex:none;margin-right:6px}
    input:checked{background:var(--yellow);border-color:var(--yellow)}
    input:checked::before{content:"";position:absolute;left:2px;top:1px;width:6px;height:3px;border:solid #605e5c;border-width:0 0 1px 1px;transform:rotate(-45deg)}
    .k{width:16px;height:16px}`; }
  html() {
    const k = this.at('kind', 'sigma');
    return `<label><span class="x">${k === 'calendar' ? '<ui-icon name="chevR"></ui-icon>' : ''}</span><input type="checkbox" ${this.hasAttribute('checked') ? 'checked' : ''}><span class="k">${k === 'none' ? '' : `<ui-icon name="${k}"></ui-icon>`}</span><span class="t"><slot></slot></span></label>`;
  }
});
define('table-row', class extends Base {
  css() { return `:host{display:block;height:24px;color:#3b3a39}
    button{display:flex;align-items:center;height:24px;padding-left:5px}
    ui-icon{display:block}
    .c{color:#797775} .i{position:relative;margin-right:4px}
    .b{position:absolute;left:8px;top:8px;width:12px;height:12px;border-radius:50%;background:var(--yellow)}
    .b::before{content:"";position:absolute;left:3px;top:4px;width:5px;height:2px;border:solid #252423;border-width:0 0 1px 1px;transform:rotate(-45deg)}`; }
  html() { const o = this.hasAttribute('open'); return `<button type="button"><ui-icon class="c" name="${o ? 'chevD' : 'chevR'}"></ui-icon><span class="i"><ui-icon name="table"></ui-icon>${o ? '<i class="b"></i>' : ''}</span><slot></slot></button>`; }
});
define('fields-pane', class extends Base {
  css() { return `:host{display:block;min-width:0} pane-head{--r:3px} search-box{margin:4px 0 6px 4px} .list{border-top:1px solid var(--line);padding-top:9px}`; }
  html() {
    const f = ['%GT 1 StarsReviews', '1 StarsReviews', 'Average of Deliver vs estimated', 'Average of review_score', 'Costs', 'Count of review_score', 'Count of seller_id', '*Earliest order_approved_at min per seller_id', '*Latest order_approved_at max per seller_id', 'olist duration', 'OrderDelivered', 'Orders', 'price', 'Profit excl IT costs', '-seller_id', 'Total Revenues'];
    const t = ['customers', 'geolocation', 'order_items', 'order_payments', 'order_reviews', 'orders', 'products', 'sellers'];
    return `<pane-head>Fields</pane-head><search-box></search-box><div class="list"><table-row open>CEO Matrix</table-row>${
      f.map(s => `<field-row ${s[0] === '*' ? 'kind="calendar"' : s[0] === '-' ? 'kind="none"' : ''} ${s === 'Total Revenues' ? 'checked' : ''}>${s.replace(/^[*-]/, '')}</field-row>`).join('')}${
      t.map(s => `<table-row>olist_${s}_dataset</table-row>`).join('')}</div>`;
  }
});

/* ---------- arrows and frames drawn over the report ---------- */
define('annotation-layer', class extends Base {
  css() { return `:host{position:absolute;top:0;right:0;width:1731px;height:940px;pointer-events:none}
    svg{display:block;filter:drop-shadow(2px 4px 2px rgba(0,0,0,.45))}`; }
  arrow(x1, y1, x2, y2, c, w, dash, hl, hw) {
    const d = Math.hypot(x2 - x1, y2 - y1), ux = (x2 - x1) / d, uy = (y2 - y1) / d, bx = x2 - ux * hl, by = y2 - uy * hl;
    return `<path d="M${x1} ${y1}L${bx} ${by}" stroke="${c}" stroke-width="${w}" stroke-dasharray="${dash}"/><path fill="${c}" d="M${x2} ${y2}L${bx - uy * hw} ${by + ux * hw}L${bx + uy * hw} ${by - ux * hw}z"/>`;
  }
  html() {
    const R = '#fd4343', P = '#63208c', T = '#0aae8f';
    const box = (x, y, w, h, c) => `<rect x="${x + .5}" y="${y + .5}" width="${w}" height="${h}" fill="none" stroke="${c}" stroke-width="3"/>`;
    return `<svg width="1731" height="940" aria-hidden="true">${
      this.arrow(1332, 267, 504, 312, R, 3, '9 3', 9, 5)}${this.arrow(1327, 271, 510, 442, P, 4, '11 4', 12, 6)}${this.arrow(1333, 284, 535, 550, T, 5, '14 5', 15, 8)}${
      this.arrow(1432, 605, 1356, 274, R, 5, '15 5', 16, 6)}${this.arrow(1421, 352, 1360, 270, P, 4, '12 4', 12, 6)}${this.arrow(1430, 570, 1365, 271, T, 5, '15 5', 16, 6)}${
      box(1327, 246, 35, 26, R)}${box(1423, 338, 169, 24, P)}${box(1431, 555, 165, 25, T)}${box(1431, 602, 169, 24, R)}</svg>`;
  }
});

/* ---------- shell ---------- */
define('pbi-app', class extends Base {
  css() { return `:host{display:grid;grid-template-rows:auto 1fr;height:100vh;position:relative;overflow:hidden}
    main{display:grid;grid-template-columns:39px minmax(0,1fr) 182px 328px;min-height:0}
    .mid{display:grid;grid-template-rows:1fr auto;grid-template-columns:1fr 33px;min-height:0}
    report-canvas,filters-pane{min-height:0;overflow:hidden} page-tabs{grid-column:1/-1}`; }
  html() { return `<pbi-ribbon></pbi-ribbon><main><side-rail></side-rail><div class="mid"><report-canvas></report-canvas><filters-pane></filters-pane><page-tabs></page-tabs></div><viz-pane></viz-pane><fields-pane></fields-pane></main><annotation-layer></annotation-layer>`; }
});
</script>
</body>
</html>
